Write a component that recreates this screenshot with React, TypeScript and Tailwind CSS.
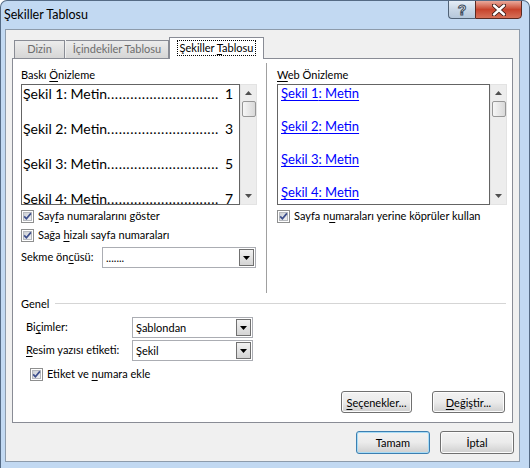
import React from "react";

const UI = "font-['Lato','Liberation_Sans',sans-serif] text-[11px]";

function U({ children }: { children: React.ReactNode }) {
  return <span className="underline decoration-1 underline-offset-[2px]">{children}</span>;
}

function Check() {
  return (
    <svg width="13" height="13" viewBox="0 0 13 13" className="shrink-0">
      <defs>
        <linearGradient id="cg" x1="0" y1="0" x2="1" y2="1">
          <stop offset="0" stopColor="#c9cdd3" />
          <stop offset="1" stopColor="#f4f4f5" />
        </linearGradient>
      </defs>
      <rect x="0.5" y="0.5" width="12" height="12" fill="#fff" stroke="#8e8f8f" />
      <rect x="2.5" y="2.5" width="8" height="8" fill="url(#cg)" stroke="#b6b9be" strokeWidth="1" />
      <path d="M3.2 6.4 L5.4 8.8 L9.9 3.4" fill="none" stroke="#3d4f8c" strokeWidth="1.7" />
    </svg>
  );
}

function Combo({ w, text }: { w: string; text: string }) {
  return (
    <div className={`${w} h-[21px] border border-[#abadb3] bg-white flex items-stretch`}>
      <span className="flex-1 pl-[3px] leading-[19px] whitespace-nowrap overflow-hidden">{text}</span>
      <span className="w-[15px] m-px border border-[#707070] bg-gradient-to-b from-[#f2f2f2] to-[#d4d4d4] flex items-center justify-center">
        <svg width="7" height="4" viewBox="0 0 7 4">
          <path d="M0 0 H7 L3.5 4 Z" fill="#000" />
        </svg>
      </span>
    </div>
  );
}

function ScrollBar() {
  return (
    <div className="w-[17px] h-[121px] bg-[#ededed] border border-[#e3e3e3] flex flex-col items-center">
      <div className="h-[16px] flex items-center justify-center">
        <svg width="7" height="4" viewBox="0 0 7 4">
          <path d="M0 4 H7 L3.5 0 Z" fill="#505050" />
        </svg>
      </div>
      <div className="w-[14px] h-[16px] rounded-[2px] border border-[#979797] bg-gradient-to-r from-[#f6f6f6] to-[#d9d9d9]" />
      <div className="flex-1" />
      <div className="h-[16px] flex items-center justify-center">
        <svg width="7" height="4" viewBox="0 0 7 4">
          <path d="M0 0 H7 L3.5 4 Z" fill="#505050" />
        </svg>
      </div>
    </div>
  );
}

function Btn({ w, children, def }: { w: string; children: React.ReactNode; def?: boolean }) {
  return (
    <div
      className={`${w} rounded-[3px] border ${
        def ? "border-[#3c7fb1] shadow-[inset_0_0_0_1px_#a8dcf6]" : "border-[#707070] shadow-[inset_0_0_0_1px_#fcfcfc]"
      } bg-gradient-to-b from-[#f2f2f2] via-[#ebebeb] via-50% to-[#cfcfcf] flex items-center justify-center leading-none`}
    >
      {children}
    </div>
  );
}

export default function App() {
  const leftItems = ["1", "3", "5", "7"];
  const dots = ".".repeat(29);
  return (
    <div className={`${UI} w-[530px] h-[468px] bg-[#c2d9f2] border-x border-t border-[#556b85] rounded-t-[7px] flex flex-col text-black overflow-hidden`}>
      {/* title bar */}
      <div className="h-[28px] flex pl-[3px]">
        <div className="self-center -mt-px text-[12.5px] leading-[15px]">Şekiller Tablosu</div>
        <div className="flex-1" />
        <div className="flex h-[19px] mr-[7px] -mt-px">
          <div className="w-[27px] h-full rounded-bl-[4px] border border-[#506276] border-r-0 bg-gradient-to-b from-[#e6eef7] via-[#c9d7e6] via-50% to-[#b5c7da] flex items-center justify-center">
            <span className="font-['Liberation_Sans',sans-serif] font-bold text-[14px] leading-none text-white [-webkit-text-stroke:1px_#3b4b5c]">?</span>
          </div>
          <div className="w-[47px] h-full rounded-br-[4px] border border-[#5a2a22] bg-gradient-to-b from-[#e9a99c] via-[#c7432c] via-50% to-[#d67058] flex items-center justify-center">
            <svg width="14" height="12" viewBox="0 0 14 12">
              <path d="M2 1.5 L12 10.5 M12 1.5 L2 10.5" stroke="#3a1a16" strokeWidth="4.2" strokeLinecap="round" />
              <path d="M2 1.5 L12 10.5 M12 1.5 L2 10.5" stroke="#ffffff" strokeWidth="2.4" strokeLinecap="round" />
            </svg>
          </div>
        </div>
      </div>

      {/* client */}
      <div className="ml-[4px] w-[515px] h-[433px] border border-[#8d9bab] bg-[#f0f0f0] flex flex-col pt-[7px] pl-[6px]">
        {/* tabs */}
        <div className="h-[21px] flex items-end">
          <div className="ml-[2px] w-[51px] h-[18px] border border-b-0 border-[#898c95] bg-gradient-to-b from-[#ececec] to-[#d6d6d6] text-[#6d6d6d] flex items-center justify-center">
            Dizin
          </div>
          <div className="ml-px w-[103px] h-[18px] border border-b-0 border-l-0 border-[#898c95] bg-gradient-to-b from-[#ececec] to-[#d6d6d6] text-[#6d6d6d] flex items-center justify-center">
            İçindekiler Tablosu
          </div>
          <div className="relative z-10 -mb-px w-[95px] h-[22px] border border-b-0 border-[#898c95] bg-white flex items-center justify-center pb-[1px]">
            <span className="border border-dotted border-black px-[2px] leading-[14px]">
              Şekiller <U>T</U>ablosu
            </span>
          </div>
        </div>

        {/* panel */}
        <div className="w-[501px] h-[365px] border border-[#898c95] bg-white flex flex-col">
          <div className="h-[234px] flex">
            {/* left column */}
            <div className="pl-[8px] pt-[8px] flex flex-col w-[244px]">
              <div className="h-[15px] leading-[15px]">
                Baskı <U>Ö</U>nizleme
              </div>
              <div className="mt-[2px] flex">
                <div className="w-[219px] h-[121px] border border-[#646464] overflow-hidden pl-px pr-[6px] font-['Lato','Liberation_Sans',sans-serif] text-[14px]">
                  {leftItems.map((n, i) => (
                    <div key={i} className="h-[35px]">
                      <div className="h-[18px] leading-[18px] flex justify-between whitespace-nowrap">
                        <span>
                          Şekil {i + 1}: Metin<span className="tracking-[0.55px]">{dots}</span>
                        </span>
                        <span>{n}</span>
                      </div>
                    </div>
                  ))}
                </div>
                <ScrollBar />
              </div>
              <div className="mt-px h-[20px] flex items-center gap-[4px]">
                <Check />
                <span>
                  Say<U>f</U>a numaralarını göster
                </span>
              </div>
              <div className="h-[19px] flex items-center gap-[4px]">
                <Check />
                <span>
                  Sağa <U>h</U>izalı sayfa numaraları
                </span>
              </div>
              <div className="mt-[2px] flex items-center">
                <span className="w-[81px]">
                  Sekme ön<U>c</U>üsü:
                </span>
                <Combo w="w-[154px]" text="......." />
              </div>
            </div>
            {/* separator */}
            <div className="ml-[9px] mt-[4px] w-px h-[230px] bg-[#a0a0a0]" />
            {/* right column */}
            <div className="ml-[10px] pt-[8px] flex flex-col">
              <div className="h-[15px] leading-[15px]">
                <U>W</U>eb Önizleme
              </div>
              <div className="mt-[2px] flex">
                <div className="w-[213px] h-[121px] border border-[#646464] overflow-hidden pl-[3px] font-['Lato','Liberation_Sans',sans-serif] text-[13px] text-[#0000ff]">
                  {[1, 2, 3, 4].map((i) => (
                    <div key={i} className="h-[33px]">
                      <div className="h-[17px] leading-[17px]">
                        <span className="underline decoration-1 underline-offset-[2px]">Şekil {i}: Metin</span>
                      </div>
                    </div>
                  ))}
                </div>
                <ScrollBar />
              </div>
              <div className="mt-px h-[20px] flex items-center gap-[4px]">
                <Check />
                <span>
                  Sayfa n<U>u</U>maraları yerine köprüler kullan
                </span>
              </div>
            </div>
          </div>

          {/* Genel */}
          <div className="mt-[3px] h-[15px] flex items-center pl-[8px] pr-[6px]">
            <span className="leading-[15px]">Genel</span>
            <div className="ml-[6px] flex-1 h-px bg-[#d5d5d5]" />
          </div>
          <div className="mt-[6px] flex items-center pl-[13px]">
            <span className="w-[106px]">
              Bi<U>ç</U>imler:
            </span>
            <Combo w="w-[121px]" text="Şablondan" />
          </div>
          <div className="mt-[2px] flex items-center pl-[13px]">
            <span className="w-[106px]">
              <U>R</U>esim yazısı etiketi:
            </span>
            <Combo w="w-[121px]" text="Şekil" />
          </div>
          <div className="mt-[3px] h-[20px] flex items-center gap-[4px] pl-[17px]">
            <Check />
            <span>
              Etiket ve <U>n</U>umara ekle
            </span>
          </div>
          <div className="mt-[7px] flex justify-end gap-[20px] pr-[7px]">
            <Btn w="w-[71px] h-[22px]">
              <span>
                <U>S</U>eçenekler...
              </span>
            </Btn>
            <Btn w="w-[73px] h-[22px]">
              <span>
                <U>D</U>eğiştir...
              </span>
            </Btn>
          </div>
        </div>

        {/* bottom buttons */}
        <div className="mt-[8px] flex justify-end gap-[10px] pr-[5px]">
          <Btn w="w-[74px] h-[23px]" def>
            Tamam
          </Btn>
          <Btn w="w-[74px] h-[23px]">İptal</Btn>
        </div>
      </div>
    </div>
  );
}
